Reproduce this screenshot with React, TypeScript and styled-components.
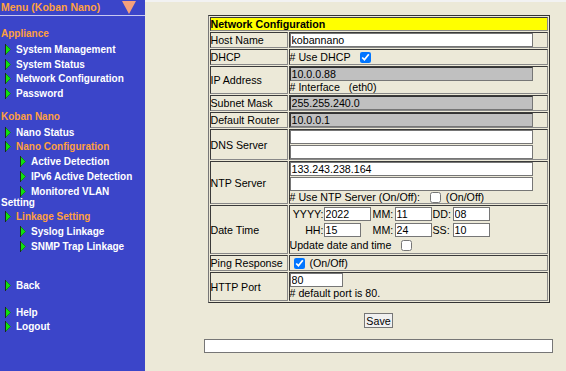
import React from "react";
import styled, { createGlobalStyle } from "styled-components";

const GlobalStyle = createGlobalStyle`
  html, body {
    margin: 0;
    padding: 0;
    background: #ece9d8;
  }
  body {
    font-family: "Liberation Sans", Arial, sans-serif;
  }
`;

const Page = styled.div`
  display: flex;
  width: 566px;
  height: 371px;
  overflow: hidden;
`;

const Sidebar = styled.div`
  width: 145px;
  flex-shrink: 0;
  background: #3b45c9;
  font-family: "Liberation Sans", Arial, sans-serif;
  font-weight: bold;
  font-size: 10px;
  color: #ffffff;
`;

const MenuHeader = styled.div`
  display: flex;
  justify-content: space-between;
  align-items: flex-start;
  height: 15px;
  border-bottom: 1px solid #c8c8f0;
  padding-left: 1px;
`;

const MenuTitle = styled.span`
  color: #ffa040;
  font-size: 10.5px;
  line-height: 15px;
`;

const MenuArrow = styled.svg`
  margin: 1px 9px 0 0;
`;

const SectionHeading = styled.div<{ $gap: number }>`
  color: #ffa040;
  line-height: 16px;
  padding-left: 1px;
  margin-top: ${(p) => p.$gap}px;
`;

const MenuItem = styled.div<{ $active?: boolean; $gap?: number }>`
  line-height: 11px;
  padding: 1.9px 0 1.9px 1px;
  margin-top: ${(p) => p.$gap || 0}px;
  color: ${(p) => (p.$active ? "#ffa040" : "#ffffff")};
`;

const BulletIcon = styled.svg<{ $level: number }>`
  width: 6px;
  height: 11px;
  vertical-align: -2px;
  margin-left: ${(p) => (p.$level === 2 ? 19 : 4)}px;
  margin-right: 5px;
`;

const Bullet = ({ level }: { level: number }) => (
  <BulletIcon $level={level} viewBox="0 0 6 11">
    <polygon points="0.5,0.5 5.5,5.5 0.5,10.5" fill="#10e010" stroke="#0a8a0a" strokeWidth="0.8" />
    <line x1="0.5" y1="0" x2="0.5" y2="11" stroke="#1c2a1c" strokeWidth="1" />
  </BulletIcon>
);

const Main = styled.div`
  flex: 1;
  display: flex;
  flex-direction: column;
  align-items: center;
  padding: 13px 0 0 46px;
  border-top: 2px solid #f2f2f2;
  font-family: "Liberation Sans", Arial, sans-serif;
  font-size: 10.67px;
  color: #000;
`;

const ConfigTable = styled.table`
  width: 342px;
  border: 1px solid #333;
  border-left-color: #777;
  border-collapse: separate;
  border-spacing: 1px;

  td {
    padding: 0;
    border: 1px solid;
    border-color: #3a3a3a #888 #888 #3a3a3a;
    line-height: 12px;
  }
`;

const Col = styled.col<{ $w?: number }>`
  width: ${(p) => (p.$w ? `${p.$w}px` : "auto")};
`;

const HeaderCell = styled.td`
  background: #ffff00;
  font-weight: bold;
`;

const LabelCell = styled.td`
  vertical-align: middle;
  white-space: nowrap;
`;

const ValueCell = styled.td`
  vertical-align: top;
`;

const TextField = styled.input<{ $w?: number; $grey?: boolean; $gap?: number }>`
  display: block;
  box-sizing: border-box;
  width: ${(p) => p.$w || 243}px;
  height: 14px;
  margin: ${(p) => p.$gap || 0}px 0 0 0;
  padding: 0 1px;
  border: 1px solid #767676;
  border-color: ${(p) => (p.$grey ? "#333 #767676 #767676 #333" : "#767676")};
  border-radius: 0;
  background: ${(p) => (p.$grey ? "#c0c0c0" : "#ffffff")};
  font-family: "Liberation Sans", Arial, sans-serif;
  font-size: 10.67px;
  color: #000;
  outline: none;
`;

const Line = styled.div<{ $h?: number }>`
  line-height: ${(p) => p.$h || 12}px;
  white-space: pre;
`;

const CheckBox = styled.input`
  width: 11px;
  height: 11px;
  margin: 0 2px 0 4px;
  vertical-align: -2px;
`;

const DateGrid = styled.div`
  display: grid;
  grid-template-columns: 34px 49px 22px 38px 20px 37px;
  grid-auto-rows: 14px;
  row-gap: 2px;
  padding-top: 1px;
  align-items: center;
`;

const DateLabel = styled.span<{ $right?: boolean }>`
  justify-self: ${(p) => (p.$right ? "end" : "start")};
  line-height: 14px;
`;

const SaveButton = styled.button`
  margin-top: 10px;
  height: 15px;
  padding: 0 1px;
  border: 1px solid #767676;
  border-radius: 0;
  background: #f0f0f0;
  font-family: "Liberation Sans", Arial, sans-serif;
  font-size: 10.67px;
  line-height: 12px;
  color: #000;
`;

const StatusField = styled.input`
  box-sizing: border-box;
  width: 349px;
  height: 14px;
  margin-top: 11px;
  border: 1px solid #767676;
  border-radius: 0;
  background: #fff;
  outline: none;
`;

const noop = () => {};

const Check = ({ on }: { on?: boolean }) => (
  <CheckBox type="checkbox" checked={!!on} onChange={noop} />
);

const App = () => {
  return (
    <Page>
      <GlobalStyle />
      <Sidebar>
        <MenuHeader>
          <MenuTitle>Menu (Koban Nano)</MenuTitle>
          <MenuArrow width="14" height="13" viewBox="0 0 14 13">
            <polygon points="0,0 14,0 7,13" fill="#f5a07c" />
          </MenuArrow>
        </MenuHeader>

        <SectionHeading $gap={10}>Appliance</SectionHeading>
        <MenuItem><Bullet level={1} />System Management</MenuItem>
        <MenuItem><Bullet level={1} />System Status</MenuItem>
        <MenuItem><Bullet level={1} />Network Configuration</MenuItem>
        <MenuItem><Bullet level={1} />Password</MenuItem>

        <SectionHeading $gap={7.5}>Koban Nano</SectionHeading>
        <MenuItem><Bullet level={1} />Nano Status</MenuItem>
        <MenuItem $active><Bullet level={1} />Nano Configuration</MenuItem>
        <MenuItem><Bullet level={2} />Active Detection</MenuItem>
        <MenuItem><Bullet level={2} />IPv6 Active Detection</MenuItem>
        <MenuItem><Bullet level={2} />Monitored VLAN Setting</MenuItem>
        <MenuItem $active><Bullet level={1} />Linkage Setting</MenuItem>
        <MenuItem><Bullet level={2} />Syslog Linkage</MenuItem>
        <MenuItem><Bullet level={2} />SNMP Trap Linkage</MenuItem>

        <MenuItem $gap={24}><Bullet level={1} />Back</MenuItem>
        <MenuItem $gap={12}><Bullet level={1} />Help</MenuItem>
        <MenuItem><Bullet level={1} />Logout</MenuItem>
      </Sidebar>

      <Main>
        <ConfigTable>
          <colgroup>
            <Col $w={78} />
            <Col />
          </colgroup>
          <tbody>
            <tr>
              <HeaderCell colSpan={2}>Network Configuration</HeaderCell>
            </tr>
            <tr>
              <LabelCell>Host Name</LabelCell>
              <ValueCell>
                <TextField readOnly value="kobannano" />
              </ValueCell>
            </tr>
            <tr>
              <LabelCell>DHCP</LabelCell>
              <ValueCell>
                <Line $h={14}># Use DHCP {"\u00a0"}<Check on /></Line>
              </ValueCell>
            </tr>
            <tr>
              <LabelCell>IP Address</LabelCell>
              <ValueCell>
                <TextField readOnly $grey value="10.0.0.88" />
                <Line># Interface {"\u00a0\u00a0"}(eth0)</Line>
              </ValueCell>
            </tr>
            <tr>
              <LabelCell>Subnet Mask</LabelCell>
              <ValueCell>
                <TextField readOnly $grey value="255.255.240.0" />
              </ValueCell>
            </tr>
            <tr>
              <LabelCell>Default Router</LabelCell>
              <ValueCell>
                <TextField readOnly $grey value="10.0.0.1" />
              </ValueCell>
            </tr>
            <tr>
              <LabelCell>DNS Server</LabelCell>
              <ValueCell>
                <TextField readOnly value="" />
                <TextField readOnly value="" $gap={1} />
              </ValueCell>
            </tr>
            <tr>
              <LabelCell>NTP Server</LabelCell>
              <ValueCell>
                <TextField readOnly value="133.243.238.164" />
                <TextField readOnly value="" $gap={1} />
                <Line># Use NTP Server (On/Off): {"\u00a0"}<Check /> (On/Off)</Line>
              </ValueCell>
            </tr>
            <tr>
              <LabelCell>Date Time</LabelCell>
              <ValueCell>
                <DateGrid>
                  <DateLabel $right>YYYY:</DateLabel>
                  <TextField readOnly value="2022" $w={47} />
                  <DateLabel>MM:</DateLabel>
                  <TextField readOnly value="11" $w={37} />
                  <DateLabel>DD:</DateLabel>
                  <TextField readOnly value="08" $w={37} />
                  <DateLabel $right>HH:</DateLabel>
                  <TextField readOnly value="15" $w={37} />
                  <DateLabel>MM:</DateLabel>
                  <TextField readOnly value="24" $w={37} />
                  <DateLabel>SS:</DateLabel>
                  <TextField readOnly value="10" $w={37} />
                </DateGrid>
                <Line $h={16}>Update date and time {"\u00a0"}<Check /></Line>
              </ValueCell>
            </tr>
            <tr>
              <LabelCell>Ping Response</LabelCell>
              <ValueCell>
                <Line $h={14}><Check on /> (On/Off)</Line>
              </ValueCell>
            </tr>
            <tr>
              <LabelCell>HTTP Port</LabelCell>
              <ValueCell>
                <TextField readOnly value="80" $w={53} />
                <Line $h={13}># default port is 80.</Line>
              </ValueCell>
            </tr>
          </tbody>
        </ConfigTable>
        <SaveButton>Save</SaveButton>
        <StatusField readOnly value="" />
      </Main>
    </Page>
  );
};

export default App;
